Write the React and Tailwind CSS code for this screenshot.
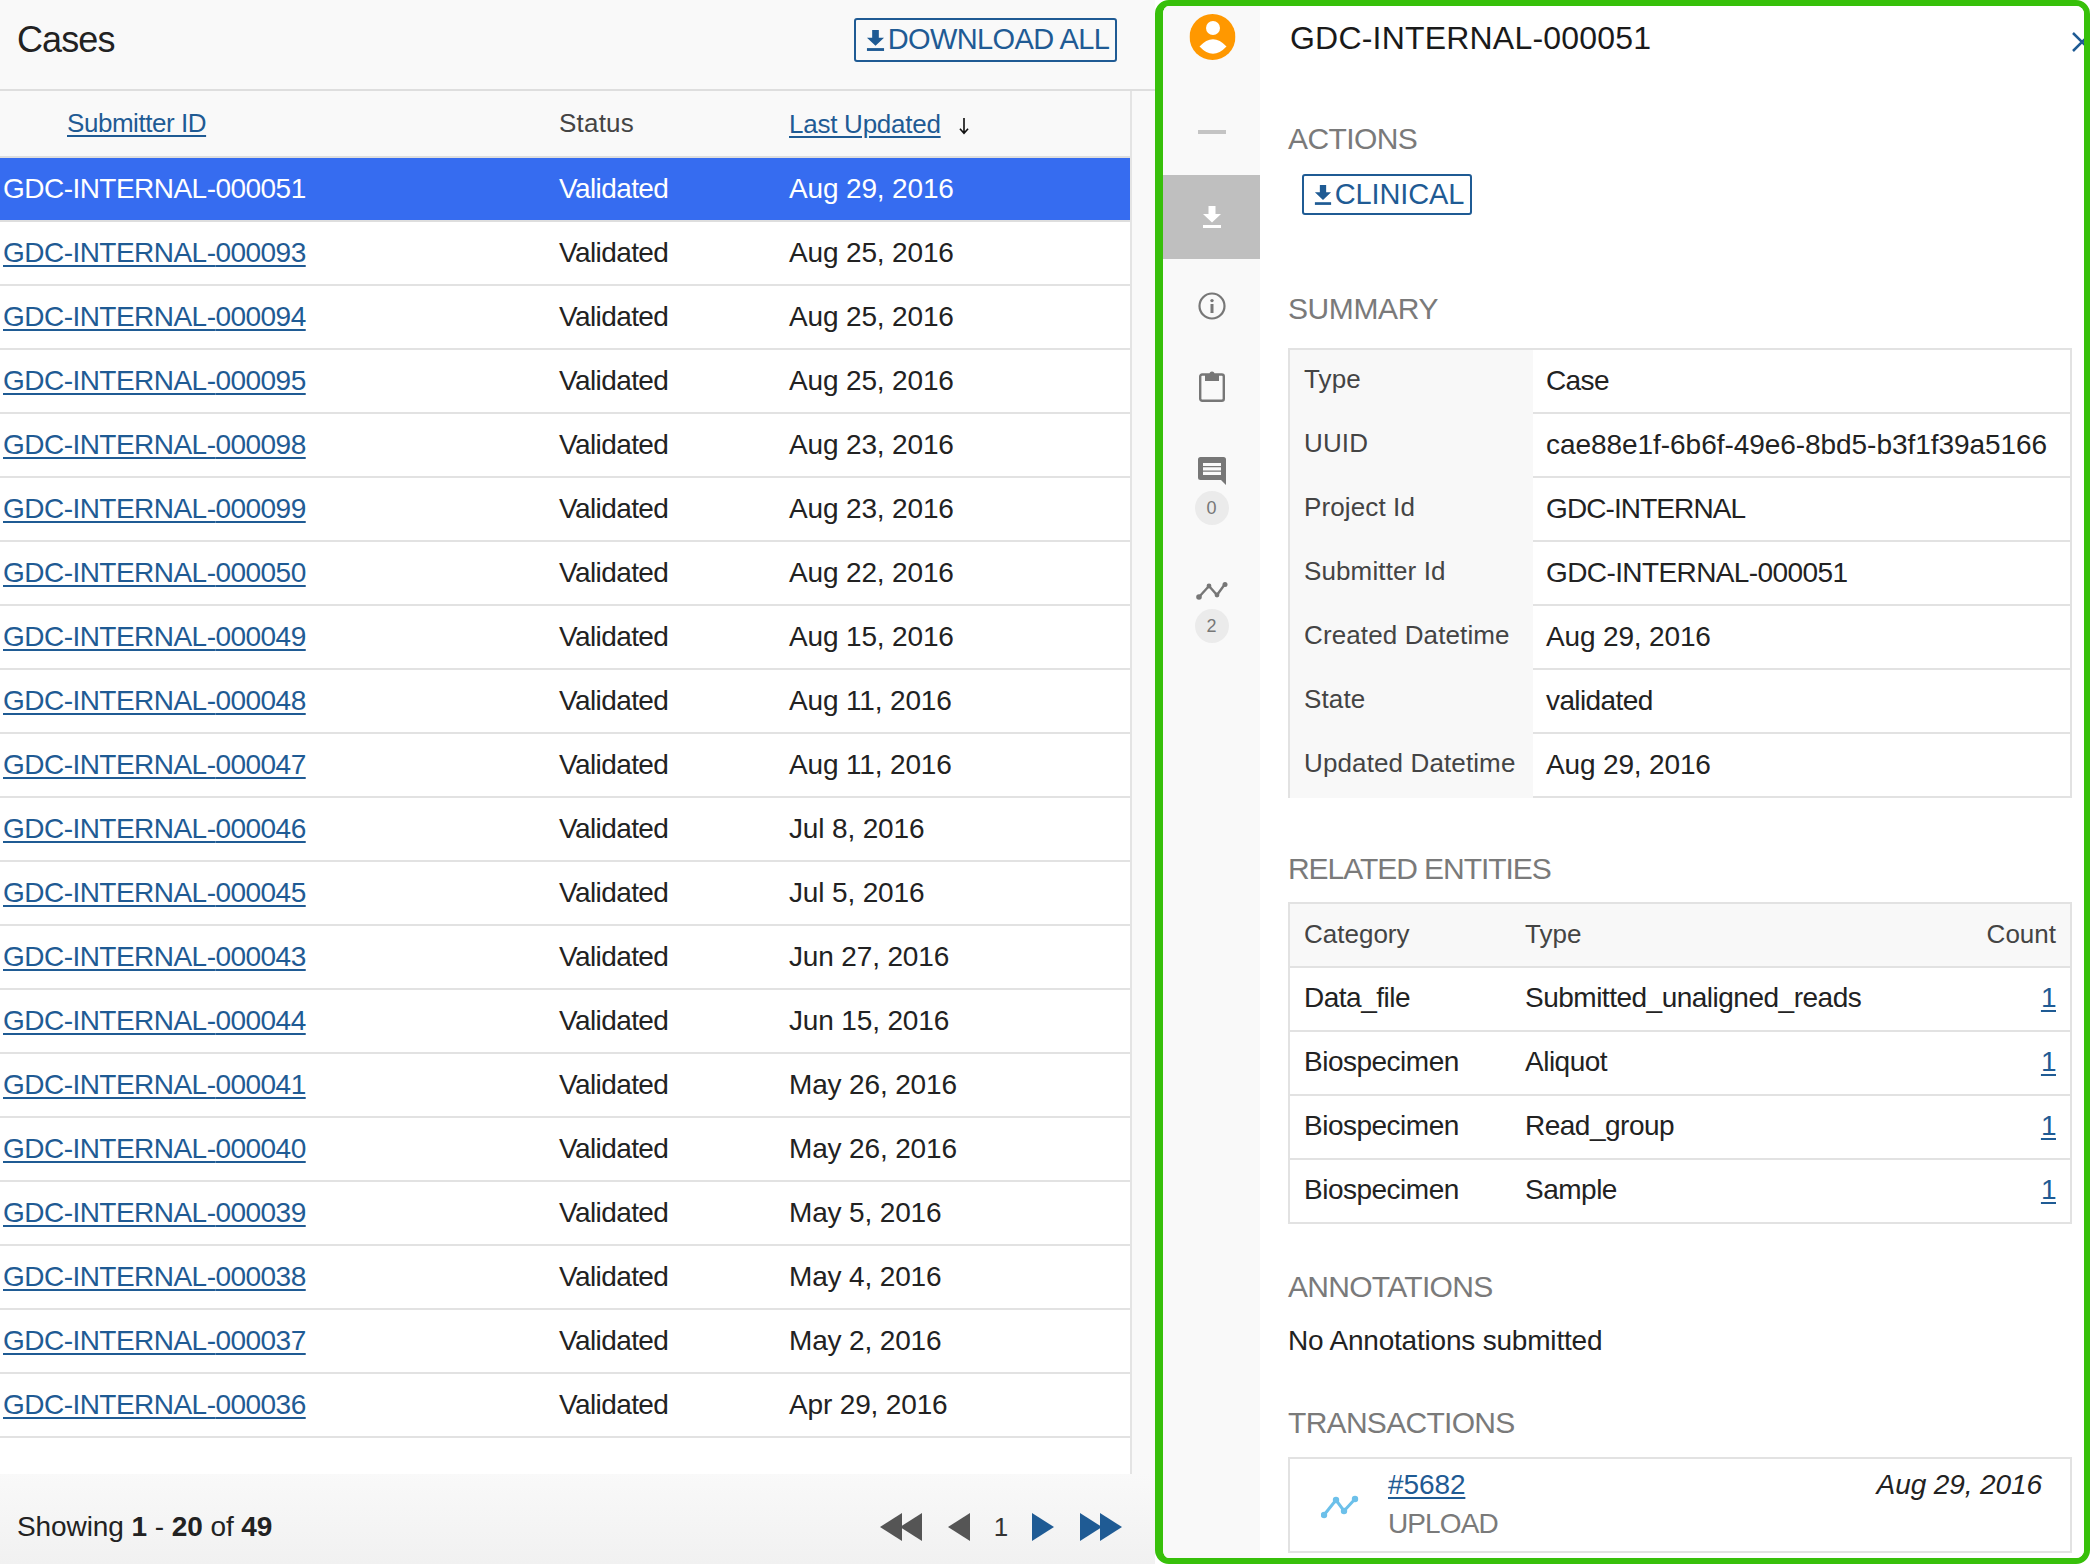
import React from 'react';

const CASES = [
  ['000051', 'Aug 29, 2016'],
  ['000093', 'Aug 25, 2016'],
  ['000094', 'Aug 25, 2016'],
  ['000095', 'Aug 25, 2016'],
  ['000098', 'Aug 23, 2016'],
  ['000099', 'Aug 23, 2016'],
  ['000050', 'Aug 22, 2016'],
  ['000049', 'Aug 15, 2016'],
  ['000048', 'Aug 11, 2016'],
  ['000047', 'Aug 11, 2016'],
  ['000046', 'Jul 8, 2016'],
  ['000045', 'Jul 5, 2016'],
  ['000043', 'Jun 27, 2016'],
  ['000044', 'Jun 15, 2016'],
  ['000041', 'May 26, 2016'],
  ['000040', 'May 26, 2016'],
  ['000039', 'May 5, 2016'],
  ['000038', 'May 4, 2016'],
  ['000037', 'May 2, 2016'],
  ['000036', 'Apr 29, 2016'],
];

const SUMMARY = [
  ['Type', 'Case', 'tracking-[-0.6px]'],
  ['UUID', 'cae88e1f-6b6f-49e6-8bd5-b3f1f39a5166', 'tracking-[-0.05px]'],
  ['Project Id', 'GDC-INTERNAL', 'tracking-[-0.9px]'],
  ['Submitter Id', 'GDC-INTERNAL-000051', 'tracking-[-0.6px]'],
  ['Created Datetime', 'Aug 29, 2016', 'tracking-[-0.15px]'],
  ['State', 'validated', 'tracking-[-0.6px]'],
  ['Updated Datetime', 'Aug 29, 2016', 'tracking-[-0.15px]'],
];

const ENTITIES = [
  ['Data_file', 'Submitted_unaligned_reads'],
  ['Biospecimen', 'Aliquot'],
  ['Biospecimen', 'Read_group'],
  ['Biospecimen', 'Sample'],
];

function DownloadIcon({ className }) {
  return (
    <svg viewBox="0 0 20 24" className={className} fill="currentColor">
      <path d="M6.500 1h7v8H19l-9 8.500L1 9h5.500z" />
      <rect x="1" y="20" width="18" height="3" />
    </svg>
  );
}

function TrendIcon({ className }) {
  return (
    <svg viewBox="0 0 32 18" className={className} fill="none" stroke="currentColor" strokeWidth="2.4">
      <path d="M3 15 L13 4 L21 13 L29 2" />
      <circle cx="3" cy="15" r="2.800" fill="currentColor" stroke="none" />
      <circle cx="13" cy="4" r="2.400" fill="currentColor" stroke="none" />
      <circle cx="21" cy="13" r="2.400" fill="currentColor" stroke="none" />
      <circle cx="29" cy="2.500" r="2.500" fill="currentColor" stroke="none" />
    </svg>
  );
}

function UploadTrendIcon({ className }) {
  return (
    <svg viewBox="0 0 38 24" className={className} fill="none" stroke="currentColor" strokeWidth="3">
      <path d="M3 20 L15 5 L23 16 L34 4" />
      <circle cx="3" cy="20" r="3.200" fill="currentColor" stroke="none" />
      <circle cx="15" cy="5" r="3.200" fill="currentColor" stroke="none" />
      <circle cx="23" cy="16" r="3.200" fill="currentColor" stroke="none" />
      <circle cx="34" cy="4" r="3.200" fill="currentColor" stroke="none" />
    </svg>
  );
}

function Arrows({ dir, double, className }) {
  const tri = (x) =>
    dir === 'left' ? `M${x + 22} 0 V28 L${x} 14 Z` : `M${x} 0 V28 L${x + 22} 14 Z`;
  return (
    <svg viewBox={`0 0 ${double ? 42 : 22} 28`} className={className} fill="currentColor">
      <path d={tri(0)} />
      {double && <path d={tri(20)} />}
    </svg>
  );
}

function SectionTitle({ children, className = '' }) {
  return <h4 className={`text-[30px] leading-[34px] text-[#7a7a7a] ${className}`}>{children}</h4>;
}

function Badge({ children }) {
  return (
    <div className="flex h-[34px] w-[34px] items-center justify-center rounded-full bg-[#ebebeb] text-[18px] text-[#777]">
      {children}
    </div>
  );
}

function CaseList() {
  return (
    <div className="flex h-full w-[1155px] flex-none flex-col bg-[#f9f9f9]">
      <div className="flex h-[91px] flex-none items-center justify-between border-b-2 border-[#dedede] pb-[9px] pl-[17px] pr-[38px]">
        <h2 className="text-[36px] tracking-[-0.9px] text-[#222]">Cases</h2>
        <button className="flex h-[44px] w-[263px] items-center justify-center gap-[3px] rounded-[3px] border-2 border-[#1f5b94] pl-[4px] text-[29px] tracking-[-0.6px] text-[#1f5b94]">
          <DownloadIcon className="h-[23px] w-[19px]" />
          DOWNLOAD ALL
        </button>
      </div>
      <div className="flex h-[1383px] w-[1132px] flex-none flex-col overflow-hidden border-r-2 border-[#e4e4e4] bg-white">
        <div className="flex h-[67px] flex-none items-center border-b-2 border-[#dedede] bg-[#f9f9f9] text-[26px]">
          <div className="w-[559px] pl-[67px] tracking-[-0.45px]">
            <span className="text-[#1f5b94] underline decoration-2 underline-offset-[3px]">Submitter ID</span>
          </div>
          <div className="w-[230px] tracking-[0.2px] text-[#444]">Status</div>
          <div className="mt-[1px] flex items-center tracking-[-0.25px]">
            <span className="text-[#1f5b94] underline decoration-2 underline-offset-[3px]">Last Updated</span>
            <svg viewBox="0 0 12 20" className="ml-[17px] mt-[4px] h-[18px] w-[12px]" fill="none" stroke="#111" strokeWidth="1.8">
              <path d="M6 1v17M1.500 13 6 18l4.500-5" />
            </svg>
          </div>
        </div>
        {CASES.map(([id, date], i) => (
          <div
            key={id}
            className={`flex h-[64px] flex-none items-center border-b-2 text-[28px] tracking-[-0.6px] ${
              i === 0 ? 'border-[#dedede] bg-[#366cf0] text-white' : 'border-[#e2e2e2] text-[#222]'
            }`}
          >
            <div className="w-[559px] pl-[3px] tracking-[-0.53px]">
              <span className={i === 0 ? '' : 'text-[#1f5b94] underline decoration-2 underline-offset-[3px]'}>
                GDC-INTERNAL-{id}
              </span>
            </div>
            <div className="w-[230px]">Validated</div>
            <div className="tracking-[-0.15px]">{date}</div>
          </div>
        ))}
      </div>
      <div className="flex flex-1 items-center justify-between bg-gradient-to-b from-[#f9f9f9] to-[#f1f1f1] pl-[17px] pr-[33px] pt-[16px]">
        <div className="text-[28px] tracking-[-0.08px] text-[#222]">
          Showing <b>1</b> - <b>20</b> of <b>49</b>
        </div>
        <div className="flex items-center">
          <Arrows dir="left" double className="h-[28px] w-[42px] text-[#555]" />
          <Arrows dir="left" className="ml-[26px] h-[28px] w-[22px] text-[#555]" />
          <span className="w-[62px] text-center text-[26px] text-[#333]">1</span>
          <Arrows dir="right" className="h-[28px] w-[22px] text-[#1f5b94]" />
          <Arrows dir="right" double className="ml-[26px] h-[28px] w-[42px] text-[#1f5b94]" />
        </div>
      </div>
    </div>
  );
}

function Sidebar() {
  return (
    <div className="flex w-[97px] flex-none flex-col items-center bg-[#f9f9f9] text-[#777]">
      <svg viewBox="0 0 46 46" className="mt-[8px] h-[46px] w-[46px] translate-x-[0.5px]">
        <circle cx="23" cy="23" r="23" fill="#ff9800" />
        <circle cx="23.500" cy="14" r="7" fill="#fff" />
        <path d="M10 32.500Q23.500 18 37 32.500Q23.500 47 10 32.500Z" fill="#fff" />
      </svg>
      <div className="mt-[70px] h-[4px] w-[28px] bg-[#c4c4c4]" />
      <div className="mt-[41px] flex h-[84px] w-full items-center justify-center bg-[#bfbfbf] text-white">
        <DownloadIcon className="h-[24px] w-[20px]" />
      </div>
      <svg viewBox="0 0 28 28" className="mt-[33px] h-[28px] w-[28px]" fill="none" stroke="currentColor" strokeWidth="2.2">
        <circle cx="14" cy="14" r="12.500" />
        <circle cx="14" cy="8.600" r="1.700" fill="currentColor" stroke="none" />
        <path d="M14 12v9" strokeWidth="3" />
      </svg>
      <svg viewBox="0 0 26 31" className="mt-[51px] h-[31px] w-[26px]" fill="none" stroke="currentColor" strokeWidth="2.400">
        <rect x="1.200" y="3.500" width="23.600" height="26.300" rx="2" />
        <path d="M6 3h4.500a2.500 2.500 0 0 1 5 0H20v7H6z" fill="currentColor" stroke="none" />
      </svg>
      <svg viewBox="0 0 28 28" className="mt-[55px] h-[28px] w-[28px]" fill="currentColor">
        <path d="M2.500 0h23A2.500 2.500 0 0 1 28 2.500V28l-5-5H2.500A2.500 2.500 0 0 1 0 20.500v-18A2.500 2.500 0 0 1 2.500 0z" />
        <path d="M5 7.500h18M5 11.900h18M5 16.300h18" stroke="#f9f9f9" strokeWidth="3.200" />
      </svg>
      <div className="mt-[6px]">
        <Badge>0</Badge>
      </div>
      <TrendIcon className="mt-[57px] h-[18px] w-[32px]" />
      <div className="mt-[9px]">
        <Badge>2</Badge>
      </div>
    </div>
  );
}

function Detail() {
  return (
    <div className="relative flex-1 overflow-hidden bg-white pl-[28px] text-[#222]">
      <h3 className="ml-[2px] mt-[13px] text-[32px] leading-[38px] tracking-[0.2px] text-[#1a1a1a]">GDC-INTERNAL-000051</h3>
      <svg viewBox="0 0 20 20" className="absolute right-[-8px] top-[26px] h-[20px] w-[20px]" fill="none" stroke="#1f5b94" strokeWidth="2.5">
        <path d="M1 1l18 18M19 1 1 19" />
      </svg>

      <SectionTitle className="mt-[65px] tracking-[-0.6px]">ACTIONS</SectionTitle>
      <button className="ml-[14px] mt-[18px] flex h-[41px] w-[170px] items-center justify-center gap-[3px] rounded-[3px] border-2 border-[#1f5b94] pl-[4px] text-[29px] tracking-[-0.1px] text-[#1f5b94]">
        <DownloadIcon className="h-[22px] w-[18px]" />
        CLINICAL
      </button>

      <SectionTitle className="mt-[77px] tracking-[-0.4px]">SUMMARY</SectionTitle>
      <div className="mt-[22px] w-[784px] border-2 border-b-0 border-[#e2e2e2]">
        {SUMMARY.map(([label, value, tracking]) => (
          <div key={label} className="flex h-[64px]">
            <div className="flex w-[243px] flex-none items-center bg-[#f8f8f8] pb-[5px] pl-[14px] text-[26px] tracking-[0.12px] text-[#444]">
              {label}
            </div>
            <div className={`flex flex-1 items-center border-b-2 border-[#e2e2e2] pl-[13px] text-[28px] ${tracking}`}>
              {value}
            </div>
          </div>
        ))}
      </div>

      <SectionTitle className="mt-[54px] tracking-[-1.05px]">RELATED ENTITIES</SectionTitle>
      <div className="mt-[16px] w-[784px] border-2 border-b-0 border-[#e2e2e2] text-[28px] tracking-[-0.5px]">
        <div className="flex h-[64px] items-center border-b-2 border-[#e2e2e2] bg-[#f8f8f8] pb-[2px] pl-[14px] pr-[14px] text-[26px] tracking-[0px] text-[#444]">
          <div className="w-[221px]">Category</div>
          <div className="flex-1">Type</div>
          <div>Count</div>
        </div>
        {ENTITIES.map(([category, type]) => (
          <div key={type} className="flex h-[64px] items-center border-b-2 border-[#e2e2e2] pb-[2px] pl-[14px] pr-[14px]">
            <div className="w-[221px]">{category}</div>
            <div className="flex-1">{type}</div>
            <span className="text-[#1f5b94] underline decoration-2 underline-offset-[3px]">1</span>
          </div>
        ))}
      </div>

      <SectionTitle className="mt-[46px] tracking-[-0.7px]">ANNOTATIONS</SectionTitle>
      <p className="mt-[19px] text-[28px] leading-[36px] tracking-[-0.2px]">No Annotations submitted</p>

      <SectionTitle className="mt-[47px] tracking-[-0.7px]">TRANSACTIONS</SectionTitle>
      <div className="mt-[17px] flex h-[96px] w-[784px] border-2 border-[#e2e2e2]">
        <UploadTrendIcon className="ml-[31px] mt-[36px] h-[24px] w-[38px] flex-none text-[#6cc0ea]" />
        <div className="ml-[29px] pt-[8px]">
          <div className="text-[28px] leading-[36px] tracking-[-0.1px] text-[#1f5b94] underline decoration-2 underline-offset-[3px]">#5682</div>
          <div className="mt-[3px] text-[28px] leading-[36px] tracking-[-0.9px] text-[#7a7a7a]">UPLOAD</div>
        </div>
        <div className="ml-auto pr-[28px] pt-[8px] text-[28px] italic leading-[36px] tracking-[-0.1px]">Aug 29, 2016</div>
      </div>
    </div>
  );
}

export default function App() {
  return (
    <div className="flex h-[1564px] w-[2090px] overflow-hidden bg-white font-['Liberation_Sans',Arial,sans-serif]">
      <CaseList />
      <div className="flex h-full flex-1 overflow-hidden rounded-[14px] border-[6px] border-l-8 border-[#37c00a]">
        <Sidebar />
        <Detail />
      </div>
    </div>
  );
}
